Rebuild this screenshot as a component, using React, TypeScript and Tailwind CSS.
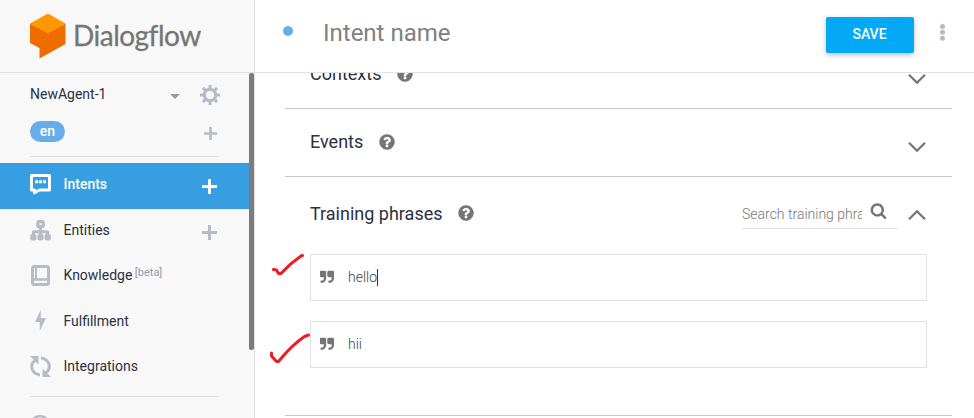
import type { ReactNode } from "react";

const Plus = ({ className = "" }: { className?: string }) => (
  <svg width="15" height="15" viewBox="0 0 15 15" className={className}>
    <path d="M7.500 0v15M0 7.500h15" stroke="currentColor" strokeWidth="3" />
  </svg>
);

const Help = () => (
  <svg width="18" height="18" viewBox="0 0 1792 1792" fill="#757575" className="-translate-y-px">
    <path d="M1024 1376v-192q0-14-9-23t-23-9h-192q-14 0-23 9t-9 23v192q0 14 9 23t23 9h192q14 0 23-9t9-23zm256-672q0-88-55.5-163t-138.5-116-170-41q-243 0-371 213-15 24 8 42l132 100q7 6 19 6 16 0 25-12 53-68 86-92 34-24 86-24 48 0 85.5 26t37.5 59q0 38-20 61t-68 45q-63 28-115.5 86.5t-52.500 125.500v36q0 14 9 23t23 9h192q14 0 23-9t9-23q0-19 21.500-49.500t54.500-49.500q32-18 49-28.500t46-35 44.500-48 28-60.500 12.500-81zm384 192q0 209-103 385.500t-279.500 279.500-385.500 103-385.500-103-279.500-279.500-103-385.500 103-385.500 279.500-279.500 385.500-103 385.500 103 279.500 279.500 103 385.500z" />
  </svg>
);

const Chevron = ({ up = false }: { up?: boolean }) => (
  <svg width="18" height="12" viewBox="0 0 18 12" fill="none" stroke="#757575" strokeWidth="2.300">
    <path d={up ? "M1 10.300 9 2.300l8 8" : "M1 1.700l8 8 8-8"} />
  </svg>
);

const Gear = () => (
  <svg width="20" height="20" viewBox="0 0 20 20" fill="none" stroke="#b7bbc5">
    <circle cx="10" cy="10" r="5.700" strokeWidth="3.200" />
    <path
      strokeWidth="3"
      d="M10 0v4M10 16v4M0 10h4M16 10h4M2.900 2.900l2.900 2.900M14.200 14.200l2.900 2.900M17.100 2.900l-2.900 2.900M5.800 14.200l-2.900 2.900"
    />
  </svg>
);

const IntentsIcon = () => (
  <svg width="21" height="21" viewBox="0 0 21 21" fill="none">
    <path d="M1.500 1.500h18v14.500H9.500L4.500 18.800V16h-3z" stroke="#fff" strokeWidth="3" strokeLinejoin="round" />
    <path d="M5.200 6.300h2.900v2.900H5.200zM9.100 6.300H12v2.900H9.100zM13 6.300h2.900v2.900H13z" fill="#fff" />
  </svg>
);

const EntitiesIcon = () => (
  <svg width="21" height="21" viewBox="0 0 21 21" fill="none" stroke="#b7bbc5">
    <rect x="7.800" y="1.700" width="5.400" height="4.800" rx="1" strokeWidth="3.200" />
    <path d="M10.500 7v8M3.500 15v-3.300h14V15" strokeWidth="3" strokeLinejoin="round" />
    <g strokeWidth="3">
      <rect x="1.700" y="15.500" width="3.200" height="3.500" rx=".5" />
      <rect x="8.900" y="15.500" width="3.200" height="3.500" rx=".5" />
      <rect x="16.100" y="15.500" width="3.200" height="3.500" rx=".5" />
    </g>
  </svg>
);

const KnowledgeIcon = () => (
  <svg width="21" height="21" viewBox="0 0 21 21" fill="none" stroke="#b7bbc5">
    <rect x="2.500" y="1.500" width="16" height="18" rx="2" strokeWidth="3" />
    <path d="M6 1v13" strokeWidth="2" />
    <path d="M2 14.500h16.500" strokeWidth="2.500" />
    <path d="M4.500 17.200h12" stroke="#f8f8f8" strokeWidth="1.600" />
  </svg>
);

const FulfillmentIcon = () => (
  <svg width="21" height="21" viewBox="0 0 21 21" fill="#b7bbc5">
    <path d="M10.800 0v8h5.200L9.800 21v-9H5z" />
  </svg>
);

const IntegrationsIcon = () => (
  <svg width="21" height="21" viewBox="0 0 21 21">
    <g fill="none" stroke="#b7bbc5" strokeWidth="3">
      <path d="M10 19c-5-.5-8.300-4.200-8.300-8.300 0-3 1.500-5.400 4-6.700M11 2c5 .500 8.300 4.200 8.300 8.300 0 3-1.500 5.400-4 6.700" />
    </g>
    <path d="M0 0h8.500v8.500zM21 21h-8.500v-8.500z" fill="#b7bbc5" />
  </svg>
);

function NavItem({ icon, children, active = false, add = false }: { icon: ReactNode; children: ReactNode; active?: boolean; add?: boolean }) {
  return (
    <div
      className={
        active
          ? "flex h-[46px] items-center bg-[#379fe1] pr-8 pb-1 pl-[30px] font-medium text-white"
          : "flex h-[45.300px] items-center pr-8 pb-[3px] pl-[30px] text-[#2b303f]"
      }
    >
      {icon}
      <span className="ml-[12.500px] flex-1">{children}</span>
      {add && <Plus className={active ? "translate-y-[2px] text-white" : "translate-y-[2px] text-[#b7bbc5]"} />}
    </div>
  );
}

function Section({ title, children }: { title: string; children?: ReactNode }) {
  return (
    <div className="flex h-[67px] items-center pr-[26px] pl-[25px]">
      <span className={children ? "mr-[14px] text-lg leading-6 text-[#2b303f]" : "mr-[14.500px] -mt-[2px] text-lg leading-6 text-[#2b303f]"}>
        {title}
      </span>
      <Help />
      {children ?? (
        <div className="mt-[8px] ml-auto">
          <Chevron />
        </div>
      )}
    </div>
  );
}

function Phrase({ text, editing = false }: { text: string; editing?: boolean }) {
  return (
    <div className="relative flex h-[47px] items-center border border-[#e0e0e0] pl-[9px]">
      <svg width="14" height="14" viewBox="128 128 1600 1600" fill="#757575" className="-translate-y-[0.500px]">
        <path d="M832 320v704q0 104-40.500 198.500t-109.500 163.500-163.500 109.500-198.500 40.500h-64q-26 0-45-19t-19-45v-128q0-26 19-45t45-19h64q106 0 181-75t75-181v-32q0-40-28-68t-68-28h-224q-80 0-136-56t-56-136v-384q0-80 56-136t136-56h384q80 0 136 56t56 136zm896 0v704q0 104-40.500 198.500t-109.500 163.500-163.500 109.500-198.500 40.500h-64q-26 0-45-19t-19-45v-128q0-26 19-45t45-19h64q106 0 181-75t75-181v-32q0-40-28-68t-68-28h-224q-80 0-136-56t-56-136v-384q0-80 56-136t136-56h384q80 0 136 56t56 136z" />
      </svg>
      <span className="-mt-[2px] ml-[14px] text-sm font-light text-[#424242]">{text}</span>
      {editing && <span className="h-[17px] w-px bg-[#333]" />}
      <svg className="absolute -top-[13px] -left-[43px]" width="44" height="60" fill="none" stroke="#ee1c25" strokeWidth="3" strokeLinecap="round" strokeLinejoin="round">
        <path d={editing ? "M5.500 27.500l3 .500 2 3.500h2.500q9-10 20-17.500l1.500-.500" : "M3.500 44v3l5 5.500h2q14-17 26-25l4-1.500"} />
      </svg>
    </div>
  );
}

export default function App() {
  return (
    <div className="flex h-[418px] w-[974px] overflow-hidden bg-white font-[Roboto,sans-serif] text-sm">
      <aside className="flex w-[255px] shrink-0 flex-col border-r border-[#e2e2e2] bg-[#f8f8f8]">
        <div className="flex h-[73px] shrink-0 items-center border-b border-[#e2e2e2] pl-[30px]">
          <svg width="36" height="46" viewBox="0 0 36 46">
            <path d="M0 10.500 18 20l17.500-9.500V31L9.500 45.500V35L0 30z" fill="#ef6c00" />
            <path d="M18 .500 35.500 10.500 18 20.500 0 10.500z" fill="#ff9800" />
          </svg>
          <span className="-mt-[3px] ml-[7px] font-[Lato,sans-serif] text-[28px] leading-8 tracking-[-0.500px] text-[#757575] [-webkit-text-stroke:0.300px_#757575]">
            Dialogflow
          </span>
        </div>
        <div className="flex min-h-0 flex-1">
          <div className="min-w-0 flex-1">
            <div className="flex h-[42px] items-center pr-[29px] pl-[30px] text-[#2b303f]">
              <span className="flex-1">NewAgent-1</span>
              <span className="mt-1 mr-5 border-x-[5px] border-t-[5px] border-x-transparent border-t-[#9499ab]" />
              <div className="mt-[2px]">
                <Gear />
              </div>
            </div>
            <div className="mt-[6px] flex h-[21px] items-center justify-between pr-8 pl-[30px]">
              <span className="flex h-[21px] w-[35px] items-center justify-center rounded-full bg-[#67adea] pb-px font-medium text-white">en</span>
              <Plus className="size-[13px] translate-y-[2px] text-[#b7bbc5]" />
            </div>
            <div className="mt-[14px] mr-[30px] mb-[6px] ml-[30px] h-px bg-[#e0e0e0]" />
            <NavItem icon={<IntentsIcon />} active add>Intents</NavItem>
            <NavItem icon={<EntitiesIcon />} add>Entities</NavItem>
            <NavItem icon={<KnowledgeIcon />}>
              Knowledge <sup className="-top-[4px] -ml-px text-[11px] text-[#9499ab]">[beta]</sup>
            </NavItem>
            <NavItem icon={<FulfillmentIcon />}>Fulfillment</NavItem>
            <NavItem icon={<IntegrationsIcon />}>Integrations</NavItem>
            <div className="mx-[30px] mt-[6px] h-px bg-[#e0e0e0]" />
            <svg className="mt-[17px] ml-[30px]" width="20" height="20" viewBox="0 0 20 20" fill="none" stroke="#b7bbc5" strokeWidth="2.500">
              <circle cx="10" cy="11" r="9" />
            </svg>
          </div>
          <div className="h-[277px] w-[5px] rounded-[2px] bg-[#7c7c7c]" />
        </div>
      </aside>
      <main className="flex min-w-0 flex-1 flex-col">
        <header className="flex h-[73px] shrink-0 items-center border-b border-[#e2e2e2] pr-[29px] pb-[2px] pl-7">
          <span className="mt-[-8px] size-[10px] rounded-full bg-[#67adea]" />
          <span className="mt-[-4px] ml-[30px] flex-1 text-2xl text-[#808080]">Intent name</span>
          <button className="h-9 w-[88px] rounded-[2px] bg-[#03a9f4] pr-px pb-[2px] text-sm font-medium text-white shadow-[0_2px_5px_rgba(0,0,0,0.26)]">SAVE</button>
          <svg className="-mt-[6px] ml-[26px]" width="5" height="17" viewBox="0 0 5 17" fill="#b7bbc5">
            <circle cx="2.500" cy="2.500" r="2.500" />
            <circle cx="2.500" cy="8.300" r="2.500" />
            <circle cx="2.500" cy="14.200" r="2.500" />
          </svg>
        </header>
        <div className="min-h-0 flex-1 overflow-hidden pr-[22px] pl-[30px]">
          <div className="-mt-8 border-b border-[#c9c2c6]">
            <Section title="Contexts" />
          </div>
          <div className="border-b border-[#c9c2c6]">
            <Section title="Events" />
          </div>
          <div className="h-[239px] border-b border-[#c9c2c6] pt-[3px]">
            <Section title="Training phrases">
              <div className="mt-[1px] ml-auto flex h-[30px] w-[156px] items-center border-b border-[#e0e0e0]">
                <span className="w-[120px] overflow-hidden whitespace-nowrap font-light text-[#757575]">Search training phrases</span>
                <svg className="-mt-[6px] ml-2" width="17" height="17" viewBox="0 0 1792 1792" fill="#757575">
                  <path d="M1216 832q0-185-131.500-316.500t-316.500-131.500-316.500 131.500-131.500 316.500 131.500 316.500 316.500 131.500 316.500-131.500 131.500-316.500zm512 832q0 52-38 90t-90 38q-54 0-90-38l-343-342q-179 124-399 124-143 0-273.500-55.500t-225-150-150-225-55.500-273.500 55.500-273.500 150-225 225-150 273.500-55.500 273.500 55.500 225 150 150 225 55.500 273.500q0 220-124 399l343 343q37 37 37 90z" />
                </svg>
              </div>
              <div className="mt-[2px] ml-[10px]">
                <Chevron up />
              </div>
            </Section>
            <div className="mt-[7px] mr-[25px] ml-[25px] flex flex-col gap-5">
              <Phrase text="hello" editing />
              <Phrase text="hii" />
            </div>
          </div>
        </div>
      </main>
    </div>
  );
}
